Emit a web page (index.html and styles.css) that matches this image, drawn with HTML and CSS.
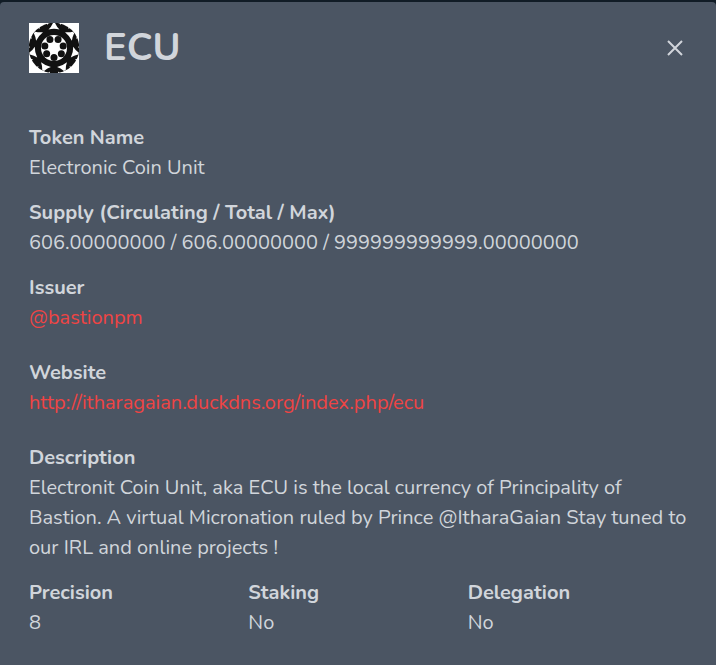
FILE: index.html
```html
<!DOCTYPE html>
<html lang="en">
<head>
<meta charset="utf-8">
<meta name="viewport" content="width=device-width, initial-scale=1">
<title>ECU</title>
<link rel="stylesheet" href="styles.css">
</head>
<body>
<main class="modal" role="dialog" aria-labelledby="token-title">
  <header class="modal-header">
    <svg class="logo" viewBox="0 0 50 50" aria-hidden="true">
      <defs>
        <g id="cutout" fill="#fff">
          <path d="M24 0 L26 0 Q27.800 4 30.500 6.500 Q25 5.200 19.500 6.500 Q22.200 4 24 0Z"/>
          <path d="M17.500 0 L19.300 0 L18.700 2Z"/>
          <path d="M32.500 0 L30.700 0 L31.300 2Z"/>
        </g>
      </defs>
      <rect width="50" height="50" fill="#fff"/>
      <circle cx="25" cy="25" r="25.300" fill="#111"/>
      <use href="#cutout"/>
      <use href="#cutout" transform="rotate(51.430 25 25)"/>
      <use href="#cutout" transform="rotate(102.860 25 25)"/>
      <use href="#cutout" transform="rotate(154.290 25 25)"/>
      <use href="#cutout" transform="rotate(205.710 25 25)"/>
      <use href="#cutout" transform="rotate(257.140 25 25)"/>
      <use href="#cutout" transform="rotate(308.570 25 25)"/>
      <circle cx="25" cy="25" r="13" fill="#fff"/>
      <g fill="#111">
        <circle cx="25" cy="34.400" r="3.500"/>
        <circle cx="32.350" cy="30.860" r="3.500"/>
        <circle cx="34.160" cy="22.910" r="3.500"/>
        <circle cx="29.080" cy="16.530" r="3.500"/>
        <circle cx="20.920" cy="16.530" r="3.500"/>
        <circle cx="15.840" cy="22.910" r="3.500"/>
        <circle cx="17.650" cy="30.860" r="3.500"/>
      </g>
    </svg>
    <h1 class="title" id="token-title">ECU</h1>
    <button class="close" type="button" aria-label="Close">
      <svg viewBox="0 0 16 16" aria-hidden="true"><path d="M1 1 15 15M15 1 1 15"/></svg>
    </button>
  </header>
  <dl class="details">
    <div class="field"><dt>Token Name</dt><dd>Electronic Coin Unit</dd></div>
    <div class="field"><dt>Supply (Circulating / Total / Max)</dt><dd>606.00000000 / 606.00000000 / 999999999999.00000000</dd></div>
    <div class="field linked"><dt>Issuer</dt><dd><a href="#issuer">@bastionpm</a></dd></div>
    <div class="field linked"><dt>Website</dt><dd><a href="http://itharagaian.duckdns.org/index.php/ecu">http://itharagaian.duckdns.org/index.php/ecu</a></dd></div>
    <div class="field"><dt>Description</dt><dd>Electronit Coin Unit, aka ECU is the local currency of Principality of Bastion. A virtual Micronation ruled by Prince @ItharaGaian Stay tuned to our IRL and online projects !</dd></div>
  </dl>
  <dl class="stats">
    <div><dt>Precision</dt><dd>8</dd></div>
    <div><dt>Staking</dt><dd>No</dd></div>
    <div><dt>Delegation</dt><dd>No</dd></div>
  </dl>
</main>
</body>
</html>
```
FILE: styles.css
```css
* {
  box-sizing: border-box;
}

body {
  margin: 0;
  padding-top: 2px;
  background: #111c26;
  color: #d1d5db;
  font: 20px/30px Nunito, Lato, sans-serif;
}

.modal {
  min-height: calc(100vh - 2px);
  padding: 20px 29px 27px;
  border-radius: 4px 4px 0 0;
  background: #4b5563;
}

.modal-header {
  display: flex;
  align-items: center;
  margin-bottom: 50px;
}

.logo {
  width: 50px;
  height: 50px;
  margin-top: 1px;
}

.title {
  margin: 0 auto 0 25px;
  font-size: 38px;
  line-height: 50px;
}

.close {
  display: flex;
  padding: 4px;
  border: 0;
  background: none;
  color: inherit;
  cursor: pointer;
}

.close svg {
  width: 16px;
  height: 16px;
  fill: none;
  stroke: currentColor;
  stroke-width: 2;
}

.details,
.stats,
dd {
  margin: 0;
}

dt {
  font-weight: 700;
}

.field {
  margin-bottom: 15px;
}

.linked {
  margin-bottom: 25px;
}

a {
  color: #ef4444;
  text-decoration: none;
}

.stats {
  display: grid;
  grid-template-columns: repeat(3, 1fr);
}
```
